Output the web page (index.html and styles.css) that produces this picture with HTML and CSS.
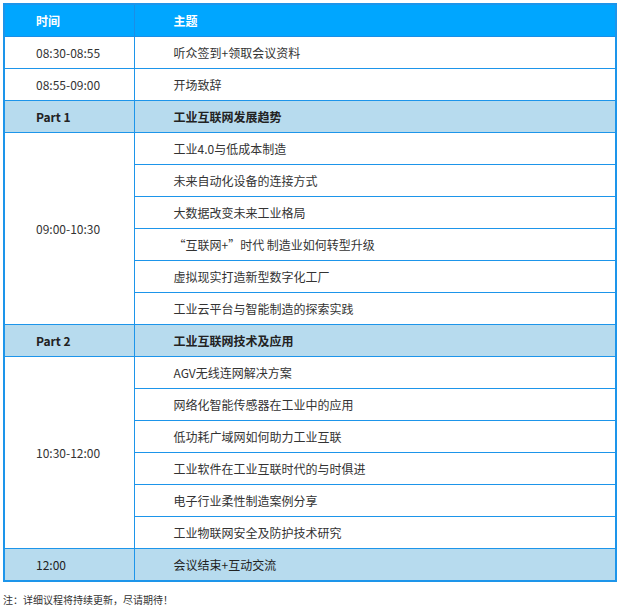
FILE: index.html
```html
<!DOCTYPE html>
<html lang="zh">
<head>
<meta charset="utf-8">
<link rel="stylesheet" href="styles.css">
</head>
<body>
<div class="wrap">
<table class="agenda">
  <colgroup><col class="c1"><col class="c2"></colgroup>
  <thead>
    <tr class="head"><th>时间</th><th>主题</th></tr>
  </thead>
  <tbody>
    <tr><td>08:30-08:55</td><td>听众签到+领取会议资料</td></tr>
    <tr><td>08:55-09:00</td><td>开场致辞</td></tr>
    <tr class="part"><td>Part 1</td><td>工业互联网发展趋势</td></tr>
    <tr><td rowspan="6">09:00-10:30</td><td>工业4.0与低成本制造</td></tr>
    <tr><td>未来自动化设备的连接方式</td></tr>
    <tr><td>大数据改变未来工业格局</td></tr>
    <tr><td>“互联网+”时代 制造业如何转型升级</td></tr>
    <tr><td>虚拟现实打造新型数字化工厂</td></tr>
    <tr><td>工业云平台与智能制造的探索实践</td></tr>
    <tr class="part"><td>Part 2</td><td>工业互联网技术及应用</td></tr>
    <tr><td rowspan="6">10:30-12:00</td><td>AGV无线连网解决方案</td></tr>
    <tr><td>网络化智能传感器在工业中的应用</td></tr>
    <tr><td>低功耗广域网如何助力工业互联</td></tr>
    <tr><td>工业软件在工业互联时代的与时俱进</td></tr>
    <tr><td>电子行业柔性制造案例分享</td></tr>
    <tr><td>工业物联网安全及防护技术研究</td></tr>
    <tr class="end"><td>12:00</td><td>会议结束+互动交流</td></tr>
  </tbody>
</table>
<p class="note">注：详细议程将持续更新，尽请期待！</p>
</div>
</body>
</html>
```
FILE: styles.css
```css
html, body {
  margin: 0;
  padding: 0;
  background: #fff;
}
body {
  font-family: "Noto Sans CJK SC", "Noto Sans", sans-serif;
  color: #333;
  font-size: 12px;
}
.wrap {
  padding: 3px 3px 0 3px;
}
.agenda {
  width: 614px;
  border-collapse: collapse;
  border: 2px solid #1d95ea;
  table-layout: fixed;
}
.c1 { width: 130px; }
.agenda th,
.agenda td {
  border: 1px solid #1d95ea;
  height: 31px;
  padding: 0 0 0 31px;
  text-align: left;
  vertical-align: middle;
  line-height: 16px;
}
.agenda th + th,
.agenda td + td,
.agenda td[rowspan] ~ td {
  padding-left: 39px;
}
.agenda tr:not(:has(td[rowspan])) td:only-child {
  padding-left: 39px;
}
.head th {
  background: #00a6ff;
  color: #fff;
  font-weight: bold;
  border-color: #1a8ee6;
}
.part td {
  background: #b7dbee;
  font-weight: bold;
  color: #222;
}
.end td {
  background: #b7dbee;
  color: #222;
}
.note {
  margin: 10px 0 0 0;
  font-size: 10px;
  color: #333;
}
```
